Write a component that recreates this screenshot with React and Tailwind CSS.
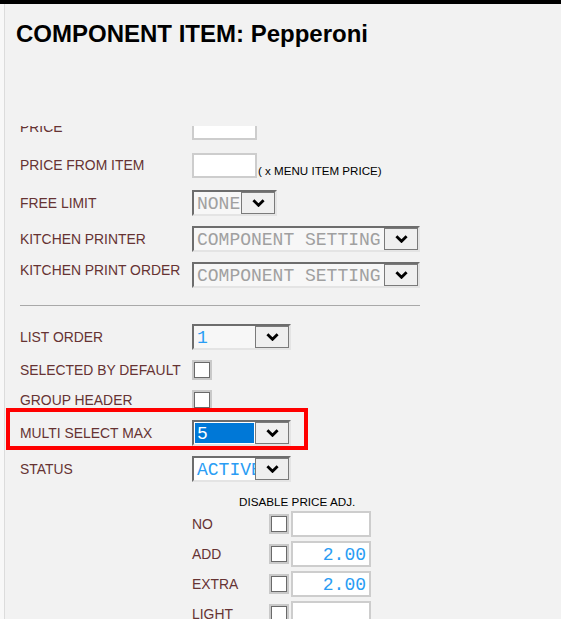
import React from "react";

const LABEL = "text-[13.9px] text-[#633] font-['Liberation_Sans',Arial,sans-serif] whitespace-nowrap";
const MONO = "font-['Liberation_Mono','Courier_New',monospace] text-[18px] leading-none";

function Chevron() {
  return (
    <svg width="13" height="8" viewBox="0 0 13 8">
      <path d="M1.4 1.2 L6.5 6.3 L11.6 1.2" fill="none" stroke="#000" strokeWidth="2.8" />
    </svg>
  );
}

function Select({ width, value, textColor, fieldBg = "bg-[#f7f7f7]", selected = false }) {
  return (
    <div
      className={`h-[26px] flex border-2 border-t-[#6d6d6d] border-l-[#6d6d6d] border-r-[#e4e4e4] border-b-[#e4e4e4] ${width}`}
    >
      <div className={`flex-1 min-w-0 overflow-hidden flex items-center ${selected ? "bg-white p-[1px]" : fieldBg}`}>
        {selected ? (
          <div className="w-full h-full bg-[#0078d7] flex items-center pl-[2px] pt-[2px]">
            <span className={`${MONO} text-white`}>{value}</span>
          </div>
        ) : (
          <span className={`${MONO} pl-[3px] pt-[2px] whitespace-nowrap ${textColor}`}>{value}</span>
        )}
      </div>
      <div className="w-[34px] shrink-0 h-full border border-[#7a7a7a] bg-[#efefef] flex items-center justify-center">
        <Chevron />
      </div>
    </div>
  );
}

function Checkbox() {
  return (
    <div className="w-[20px] h-[20px] bg-[#c9c9c9] p-[2px] shrink-0">
      <div className="w-full h-full border border-[#6a6a6a] bg-white" />
    </div>
  );
}

function TextBox({ className = "" }) {
  return <div className={`border-2 border-[#cdcdcd] bg-white ${className}`} />;
}

function Row({ label, children, className = "", labelClass = "" }) {
  return (
    <div className={`flex items-center ${className}`}>
      <div className={`w-[172px] shrink-0 ${LABEL} ${labelClass}`}>{label}</div>
      {children}
    </div>
  );
}

function PriceRow({ label, value, className = "" }) {
  return (
    <div className={`flex items-center h-[26px] ${className}`}>
      <div className="w-[172px] shrink-0" />
      <div className={`w-[77px] shrink-0 ${LABEL}`}>{label}</div>
      <Checkbox />
      <div className="w-[80px] h-[26px] ml-[2px] border-2 border-[#cdcdcd] bg-white flex items-center justify-end pr-[3px] pt-[2px]">
        <span className={`${MONO} text-[#2a9df4]`}>{value}</span>
      </div>
    </div>
  );
}

export default function App() {
  return (
    <div className="w-[561px] h-[619px] overflow-hidden bg-[#f2f2f2] flex flex-col font-['Liberation_Sans',Arial,sans-serif]">
      <div className="h-[4px] bg-black shrink-0" />
      <div className="flex flex-1 min-h-0">
        <div className="w-[5px] shrink-0 bg-[#f8f8f8] border-r border-[#dcdcdc]" />
        <div className="flex-1 min-w-0 flex flex-col">
          <h1 className="ml-[11px] mt-[19px] text-[24px] leading-[22px] font-bold text-black whitespace-nowrap">
            COMPONENT ITEM: Pepperoni
          </h1>
          <div className="mt-[81px] flex-1 min-h-0 overflow-hidden">
            <div className="-mt-[11px] pl-[15px]">
              <Row label="PRICE" className="h-[25px]">
                <TextBox className="w-[65px] h-[25px]" />
              </Row>
              <Row label="PRICE FROM ITEM" className="h-[25px] mt-[13px]">
                <TextBox className="w-[65px] h-[25px]" />
                <span className="self-end ml-[1px] text-[11.6px] leading-[14px] text-black whitespace-nowrap">
                  ( x MENU ITEM PRICE)
                </span>
              </Row>
              <Row label="FREE LIMIT" className="h-[26px] mt-[12px]">
                <Select width="w-[85px]" value="NONE" textColor="text-[#a0a0a0]" />
              </Row>
              <Row label="KITCHEN PRINTER" className="h-[26px] mt-[10px]">
                <Select width="w-[228px]" value="COMPONENT SETTING" textColor="text-[#a0a0a0]" />
              </Row>
              <Row label="KITCHEN PRINT ORDER" className="h-[26px] mt-[10px]" labelClass="-mt-[9px]">
                <Select width="w-[228px]" value="COMPONENT SETTING" textColor="text-[#a0a0a0]" />
              </Row>
              <div className="mt-[17px] w-[400px] h-px bg-[#a9a9a9]" />
              <Row label="LIST ORDER" className="h-[26px] mt-[18px]">
                <Select width="w-[99px]" value="1" textColor="text-[#2a9df4]" />
              </Row>
              <Row label="SELECTED BY DEFAULT" className="h-[20px] mt-[10px]">
                <Checkbox />
              </Row>
              <Row label="GROUP HEADER" className="h-[20px] mt-[10px]">
                <Checkbox />
              </Row>
              <div className="-mt-[2px] -ml-[14px] w-[302px] h-[42px] border-4 border-[#ff0000] pt-[8px] pl-[10px] relative">
                <Row label="MULTI SELECT MAX" className="h-[26px]">
                  <Select width="w-[99px]" value="5" selected />
                </Row>
              </div>
              <Row label="STATUS" className="h-[26px] mt-[6px]">
                <Select width="w-[99px]" value="ACTIVE" textColor="text-[#2a9df4]" fieldBg="bg-white" />
              </Row>
              <div className="mt-[13px] ml-[219px] text-[11.7px] leading-[13px] text-black whitespace-nowrap">
                DISABLE PRICE ADJ.
              </div>
              <PriceRow label="NO" value="" className="mt-[3px]" />
              <PriceRow label="ADD" value="2.00" className="mt-[4px]" />
              <PriceRow label="EXTRA" value="2.00" className="mt-[4px]" />
              <PriceRow label="LIGHT" value="" className="mt-[4px]" />
            </div>
          </div>
        </div>
      </div>
    </div>
  );
}
